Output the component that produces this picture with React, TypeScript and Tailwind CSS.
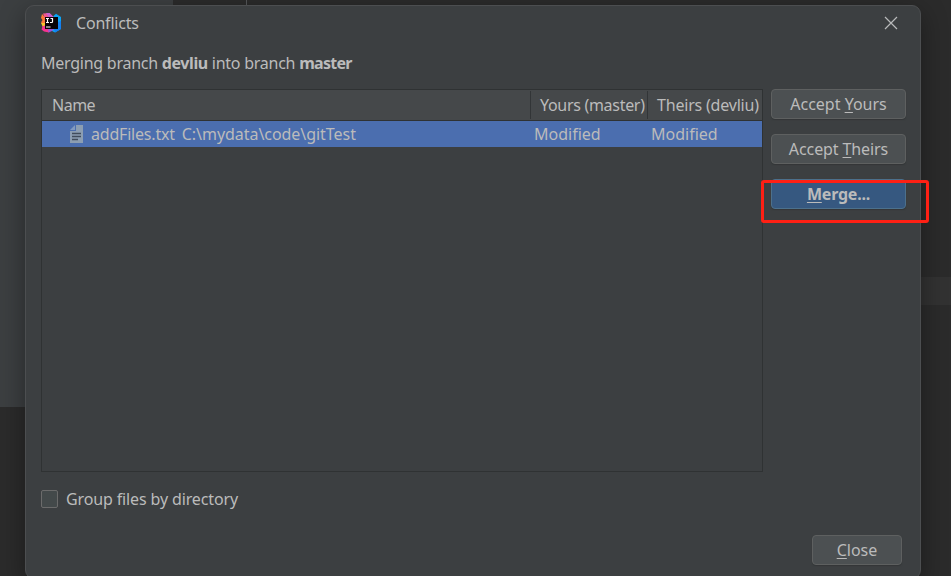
import React from 'react';

const FONT = "font-['Noto_Sans','Open_Sans',sans-serif]";

function IdeaLogo() {
  return (
    <svg width="21" height="20" viewBox="0 0 21 20" className="shrink-0">
      <path d="M12.5 3 L15 .8 L20 4 L20 16 L14 19.5 L9 17 Z" fill="#0aa5f7" />
      <path d="M17 9 L20 8 L20 16 L14 19.5 L13 16 Z" fill="#1480f2" />
      <path d="M1 1 L4 4 L5 15 L1 13.5 L2.5 11 L0 9.5 L1.5 7 L0 5 Z" fill="#fc7a35" />
      <path d="M0 10 L4 10 L5 13 L1.5 13 Z" fill="#f7c52e" />
      <path d="M2 .5 L8.5 0 L13 4.5 L4 6 Z" fill="#f0568a" />
      <path d="M5 0 L8.5 0 L13 4.5 L8 4.5 Z" fill="#c65fd0" />
      <path d="M1.5 13.5 L5 12 L10 16 L8 19.5 L3 18.5 L0.5 16.5 Z" fill="#f6338f" />
      <path d="M7 16 L13 16 L11 18 L7.5 19.5 Z" fill="#9a55d8" />
      <rect x="4" y="4" width="13" height="12" fill="#080308" />
      <path d="M5 5.5h3M6.5 5.5v4M5 9.5h3M9.5 5.5h2v3.2q0 .8-.8 .8H9M5 14h4.5" stroke="#fff" strokeWidth="1.2" fill="none" />
    </svg>
  );
}

function FileIcon() {
  return (
    <svg width="13" height="18" viewBox="0 0 13 18" className="shrink-0">
      <path d="M0 5 L5 0 V5 Z" fill="#829abf" />
      <path d="M6 0 H13 V18 H0 V6 H6 Z" fill="#8c9eb2" />
      <path d="M2 8.5h9M2 11.5h9M2 14.5h6" stroke="#414d5c" strokeWidth="1.3" />
    </svg>
  );
}

function Button({ mnemonic, before = '', after, className }: { mnemonic: string; before?: string; after: string; className: string }) {
  return (
    <button className={`flex items-center justify-center whitespace-pre rounded-[4px] border shadow-[0_1px_1px_#333638] ${className}`}>
      <span>
        {before}
        <span className="underline decoration-1 underline-offset-[2px] [text-decoration-skip-ink:none]">{mnemonic}</span>
        {after}
      </span>
    </button>
  );
}

export default function App() {
  return (
    <div className={`relative h-[576px] w-[951px] overflow-hidden bg-[#2b2b2b] text-[16px] leading-[20px] text-[#bbbbbb] ${FONT}`}>
      <div className="absolute left-0 top-0 h-[407px] w-[173px] bg-[#3c3f41]" />
      <div className="absolute left-[246px] top-0 h-[6px] w-px bg-[#555759]" />
      <div className="absolute left-[921px] top-[277px] h-[28px] w-[30px] bg-[#323232]" />

      <div className="absolute left-[25px] top-[5px] flex h-[574px] w-[896px] flex-col rounded-[9px] border border-[#4c4e50] bg-[#3c3f41] pl-[15px] pr-[14px] shadow-[0_8px_26px_rgba(0,0,0,0.38)]">
        <header className="flex h-[34px] items-center">
          <IdeaLogo />
          <h1 className="ml-[14px] tracking-[-0.2px]">Conflicts</h1>
          <svg width="14" height="14" viewBox="0 0 14 14" className="ml-auto mr-[8px]">
            <path d="M1 1 L13 13 M13 1 L1 13" stroke="#b9babb" strokeWidth="1.2" fill="none" />
          </svg>
        </header>

        <p className="mt-[13px] h-[20px] whitespace-pre tracking-[-0.25px]">
          Merging branch <b className="tracking-[-0.4px]">devliu</b> into branch <b className="tracking-[-0.7px]">master</b>
        </p>

        <div className="mt-[16px] flex">
          <section className="h-[383px] w-[722px] border border-[#2f3233]">
            <div className="flex h-[31px] items-center whitespace-nowrap border-b border-[#2f3233] bg-[#45484a]">
              <div className="flex h-[28px] w-[489px] items-center border-r border-[#323537] pl-[10px] tracking-[-0.5px]">Name</div>
              <div className="flex h-[28px] w-[117px] items-center border-r border-[#323537] pl-[9px] tracking-[-0.3px]">Yours (master)</div>
              <div className="flex h-[28px] items-center pl-[9px] tracking-[-0.2px]">Theirs (devliu)</div>
            </div>
            <div className="flex h-[26px] items-center whitespace-nowrap bg-[#4b6eaf]">
              <div className="flex w-[492px] items-center pl-[28px]">
                <FileIcon />
                <span className="ml-[8px] tracking-[-0.2px]">addFiles.txt</span>
                <span className="ml-[7px] tracking-[-0.05px]">C:\mydata\code\gitTest</span>
              </div>
              <div className="w-[117px]">Modified</div>
              <div>Modified</div>
            </div>
          </section>

          <aside className="ml-[8px] flex flex-col gap-[15px]">
            <Button before="Accept " mnemonic="Y" after="ours" className="h-[30px] w-[135px] border-[#5e6060] bg-[#4c5052]" />
            <Button before="Accept " mnemonic="T" after="heirs" className="h-[30px] w-[135px] border-[#5e6060] bg-[#4c5052] tracking-[-0.1px]" />
            <Button mnemonic="M" after="erge..." className="h-[30px] w-[135px] border-[#4c708c] bg-[#365880] font-bold tracking-[-0.2px]" />
          </aside>
        </div>

        <label className="mt-[17px] flex h-[20px] items-center">
          <span className="h-[18px] w-[17px] rounded-[2px] border border-[#6b6b6b] bg-[#43494a]" />
          <span className="ml-[8px] tracking-[-0.13px]">Group files by directory</span>
        </label>

        <footer className="mt-[26px] flex justify-end pr-[4px]">
          <Button mnemonic="C" after="lose" className="h-[30px] w-[90px] border-[#5e6060] bg-[#4c5052]" />
        </footer>
      </div>

      <div className="absolute left-[761px] top-[180px] h-[43px] w-[168px] rounded-[3px] border-[3px] border-[#ff2014]" />
    </div>
  );
}
